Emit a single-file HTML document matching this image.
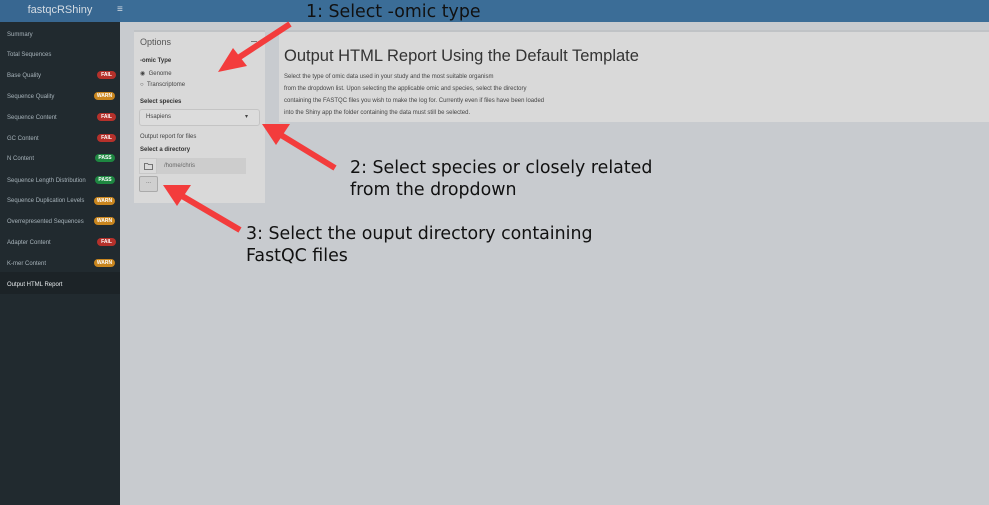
<!DOCTYPE html>
<html><head><style>
body{margin:0;width:989px;height:505px;background:#c8cbcf;font-family:"Liberation Sans",sans-serif;position:relative;overflow:hidden}
.top{position:absolute;left:0;top:0;width:989px;height:22px;background:#3b6d97}
.logo{position:absolute;left:0;top:0;width:120px;height:22px;background:#386791;color:#d6dde4;font-size:11px;text-align:center;line-height:20px}
.side{position:absolute;left:0;top:22px;width:120px;height:483px;background:#212a2f}
.it{position:absolute;left:7px;font-size:6px;color:#a7b3ba;margin-top:2px}
.b{position:absolute;left:0;width:19px;height:8px;border-radius:4px;color:#fff;font-size:5px;font-weight:bold;text-align:center;line-height:8px}
.f{background:#b5312b}.w{background:#c9861f}.p{background:#1e8741}
.box{position:absolute;background:#d9d9d9;border-top:2px solid #c0c3c6}
.s{font-size:6px;color:#444;position:absolute}
.ann{position:absolute;font-family:"DejaVu Sans",sans-serif;font-size:17.4px;color:#111;line-height:22px}
</style></head><body>
<div class="top"></div><div class="logo">fastqcRShiny</div>
<div style="position:absolute;left:117px;top:4px;color:#d6dde4;font-size:10px">≡</div>
<div class="side"></div>
<div style="position:absolute;left:0;top:272px;width:120px;height:22px;background:#1c2327"></div>
<div class="it" style="top:30px">Summary</div>
<div class="it" style="top:50px">Total Sequences</div>
<div class="it" style="top:71px">Base Quality</div><div class="b f" style="left:97px;top:71px">FAIL</div>
<div class="it" style="top:92px">Sequence Quality</div><div class="b w" style="left:94px;top:92px;width:21px">WARN</div>
<div class="it" style="top:113px">Sequence Content</div><div class="b f" style="left:97px;top:113px">FAIL</div>
<div class="it" style="top:134px">GC Content</div><div class="b f" style="left:97px;top:134px">FAIL</div>
<div class="it" style="top:154px">N Content</div><div class="b p" style="left:95px;top:154px;width:20px">PASS</div>
<div class="it" style="top:176px">Sequence Length Distribution</div><div class="b p" style="left:95px;top:176px;width:20px">PASS</div>
<div class="it" style="top:196px">Sequence Duplication Levels</div><div class="b w" style="left:94px;top:197px;width:21px">WARN</div>
<div class="it" style="top:217px">Overrepresented Sequences</div><div class="b w" style="left:94px;top:217px;width:21px">WARN</div>
<div class="it" style="top:238px">Adapter Content</div><div class="b f" style="left:97px;top:238px">FAIL</div>
<div class="it" style="top:259px">K-mer Content</div><div class="b w" style="left:94px;top:259px;width:21px">WARN</div>
<div class="it" style="top:280px;color:#e8ecee">Output HTML Report</div>

<div class="box" style="left:134px;top:30px;width:131px;height:171px">
<div style="position:absolute;left:6px;top:5px;font-size:9px;color:#555">Options</div>
<div style="position:absolute;left:117px;top:9px;width:6px;height:1px;background:#777"></div>
<div class="s" style="left:6px;top:26px;font-weight:bold;color:#333">-omic Type</div>
<div class="s" style="left:6px;top:38px">◉ &nbsp;Genome</div>
<div class="s" style="left:6px;top:50px">○ &nbsp;Transcriptome</div>
<div class="s" style="left:6px;top:67px;font-weight:bold;color:#333">Select species</div>
<div style="position:absolute;left:5px;top:77px;width:119px;height:15px;border:1px solid #c4c4c4;border-radius:3px;background:#dcdcdc"></div>
<div class="s" style="left:12px;top:82px">Hsapiens</div>
<div class="s" style="left:111px;top:81px">▾</div>
<div class="s" style="left:6px;top:102px">Output report for files</div>
<div class="s" style="left:6px;top:115px;font-weight:bold;color:#333">Select a directory</div>
<div style="position:absolute;left:5px;top:126px;width:107px;height:16px;background:#cdcdcd"></div>
<div style="position:absolute;left:5px;top:126px;width:18px;height:16px;background:#dadada;border:1px solid #c8c8c8;box-sizing:border-box"></div>
<svg style="position:absolute;left:10px;top:130px" width="9" height="8"><path d="M0.5 1.5h3l1 1h4v5h-8z" fill="none" stroke="#555" stroke-width="0.8"/></svg>
<div class="s" style="left:30px;top:131px;color:#666">/home/chris</div>
<div style="position:absolute;left:5px;top:144px;width:17px;height:14px;background:#cfcfcf;border:1px solid #aaa;border-radius:2px;font-size:6px;color:#666;text-align:center;line-height:10px">...</div>
</div>
<div class="box" style="left:279px;top:30px;width:710px;height:90px">
<div style="position:absolute;left:5px;top:15px;font-size:16.5px;color:#333">Output HTML Report Using the Default Template</div>
<div class="s" style="left:5px;top:39px;line-height:12px;color:#444">Select the type of omic data used in your study and the most suitable organism<br>from the dropdown list. Upon selecting the applicable omic and species, select the directory<br>containing the FASTQC files you wish to make the log for. Currently even if files have been loaded<br>into the Shiny app the folder containing the data must still be selected.</div>
</div>

<svg style="position:absolute;left:0;top:0" width="989" height="505">
<g stroke="#f33c3c" stroke-width="6" fill="#f33c3c">
<line x1="290" y1="24" x2="232" y2="62"/><polygon stroke="none" points="218,72 233,48 247,66"/>
<line x1="335" y1="168" x2="276" y2="132"/><polygon stroke="none" points="262,124 290,124 276,145"/>
<line x1="240" y1="230" x2="177" y2="193"/><polygon stroke="none" points="163,185 191,185 177,206"/>
</g></svg>
<div class="ann" style="left:306px;top:1px">1: Select -omic type</div>
<div class="ann" style="left:350px;top:157px">2: Select species or closely related<br>from the dropdown</div>
<div class="ann" style="left:246px;top:223px">3: Select the ouput directory containing<br>FastQC files</div>
</body></html>
